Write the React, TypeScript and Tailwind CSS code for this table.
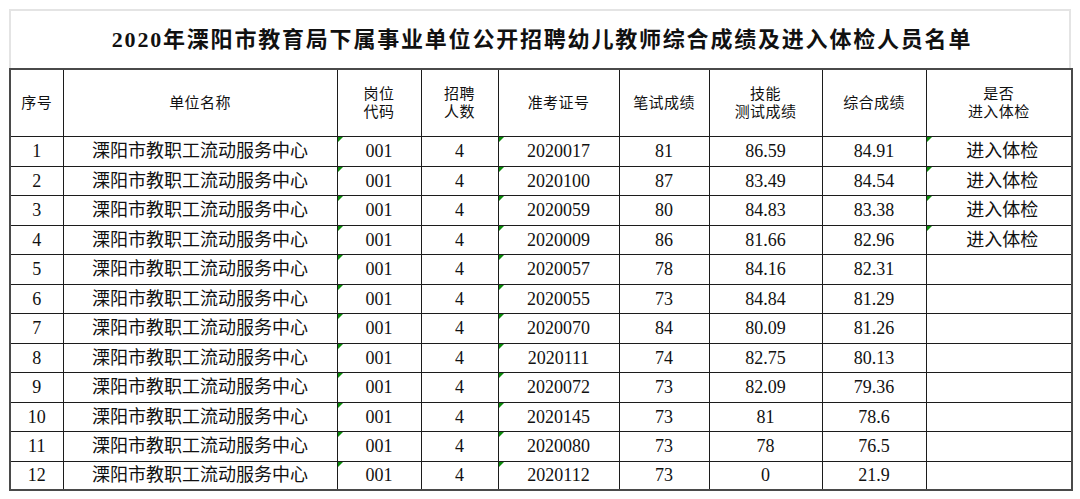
const rows = [
  { no: 1, score1: "81", score2: "86.59", total: "84.91", id: "2020017", pass: true },
  { no: 2, score1: "87", score2: "83.49", total: "84.54", id: "2020100", pass: true },
  { no: 3, score1: "80", score2: "84.83", total: "83.38", id: "2020059", pass: true },
  { no: 4, score1: "86", score2: "81.66", total: "82.96", id: "2020009", pass: true },
  { no: 5, score1: "78", score2: "84.16", total: "82.31", id: "2020057", pass: false },
  { no: 6, score1: "73", score2: "84.84", total: "81.29", id: "2020055", pass: false },
  { no: 7, score1: "84", score2: "80.09", total: "81.26", id: "2020070", pass: false },
  { no: 8, score1: "74", score2: "82.75", total: "80.13", id: "2020111", pass: false },
  { no: 9, score1: "73", score2: "82.09", total: "79.36", id: "2020072", pass: false },
  { no: 10, score1: "73", score2: "81", total: "78.6", id: "2020145", pass: false },
  { no: 11, score1: "73", score2: "78", total: "76.5", id: "2020080", pass: false },
  { no: 12, score1: "73", score2: "0", total: "21.9", id: "2020112", pass: false },
];

const widths = [53, 274, 84, 77, 121, 90, 113, 104, 146];

// little green "number stored as text" marker in the cell corner
function Flag() {
  return (
    <svg className="absolute left-0 top-0" width="5" height="5" viewBox="0 0 5 5">
      <polygon points="0,0 5,0 0,5" fill="#0a8a0a" />
    </svg>
  );
}

const th = "border border-[#1c1c1c] text-center align-middle font-normal text-[15px] leading-[18px] tracking-[0.4px]";
const td = "relative border border-[#1c1c1c] text-center align-middle p-0 text-[18px] leading-none";

export default function App() {
  return (
    <div
      className="w-[1080px] h-[499px] bg-white pt-[9px] px-[9px] text-[#111]"
      style={{ fontFamily: '"Liberation Serif", "Noto Sans CJK SC", serif' }}
    >
      <div className="w-[1062px] h-[59px] border-2 border-b-0 border-[#e4e4e4] flex items-center justify-center">
        <h1 className="text-[22px] font-bold tracking-[1.8px] pl-[4px]">
          2020年溧阳市教育局下属事业单位公开招聘幼儿教师综合成绩及进入体检人员名单
        </h1>
      </div>
      <table className="table-fixed border-collapse w-[1062px] border-2 border-[#4a4a4a]">
        <colgroup>
          {widths.map((w, i) => (
            <col key={i} style={{ width: w }} />
          ))}
        </colgroup>
        <thead>
          <tr className="h-[67px]">
            <th className={th}>序号</th>
            <th className={th}>单位名称</th>
            <th className={th}>岗位<br />代码</th>
            <th className={th}>招聘<br />人数</th>
            <th className={th}>准考证号</th>
            <th className={th}>笔试成绩</th>
            <th className={th}>技能<br />测试成绩</th>
            <th className={th}>综合成绩</th>
            <th className={th}>是否<br />进入体检</th>
          </tr>
        </thead>
        <tbody>
          {rows.map((r, i) => (
            <tr key={r.no} className={i % 2 === 0 ? "h-[30px]" : "h-[29px]"}>
              <td className={td}>{r.no}</td>
              <td className={td}>溧阳市教职工流动服务中心</td>
              <td className={td}>
                <Flag />
                001
              </td>
              <td className={td}>4</td>
              <td className={td}>
                <Flag />
                {r.id}
              </td>
              <td className={td}>{r.score1}</td>
              <td className={td}>{r.score2}</td>
              <td className={td}>{r.total}</td>
              <td className={td + " pl-[7px]"}>
                {r.pass && <Flag />}
                {r.pass ? "进入体检" : ""}
              </td>
            </tr>
          ))}
        </tbody>
      </table>
    </div>
  );
}
